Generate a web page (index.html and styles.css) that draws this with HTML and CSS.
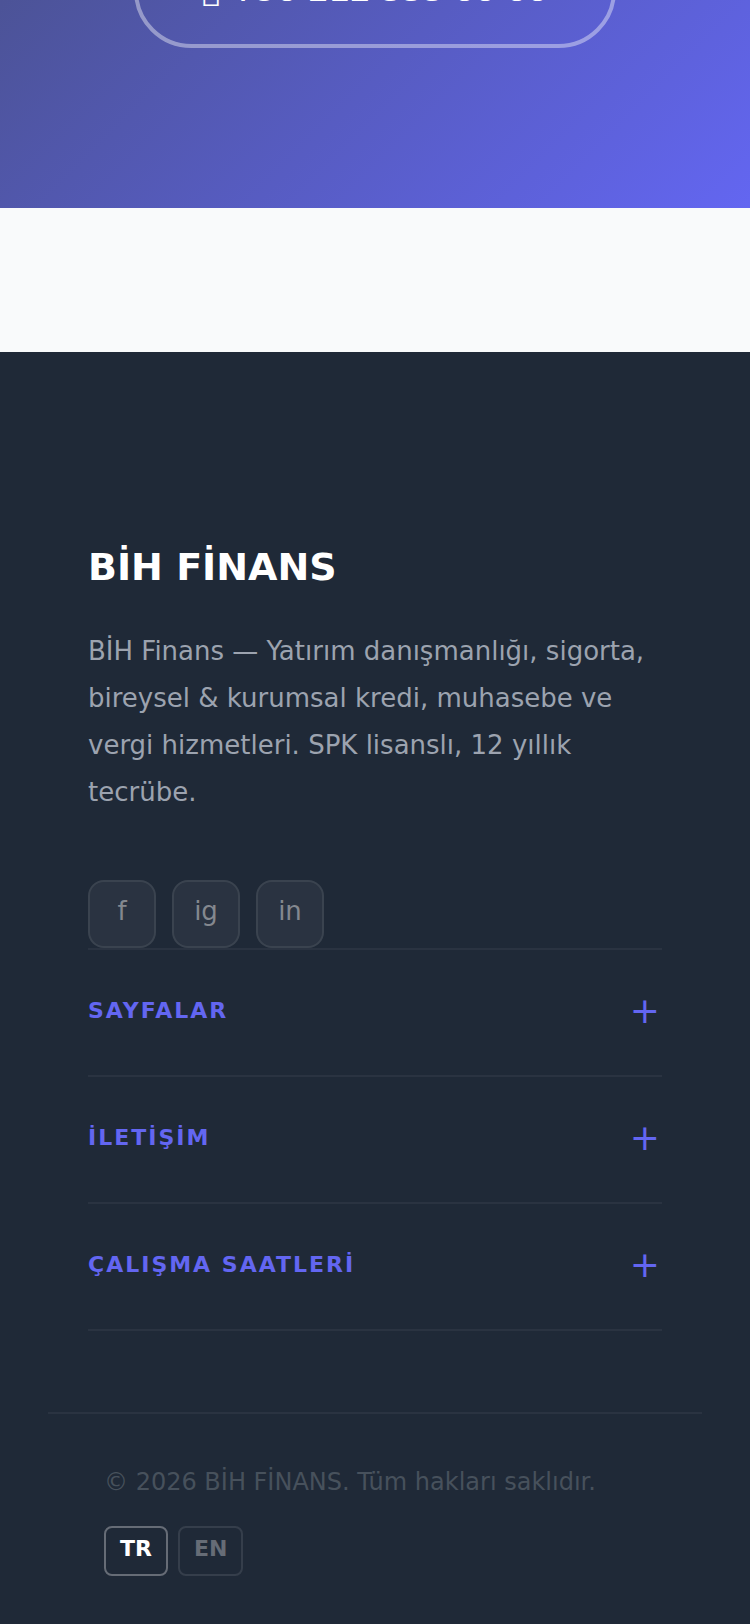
FILE: index.html
```html
<!DOCTYPE html>
<html lang="tr">
<head>
<meta charset="UTF-8">
<meta name="viewport" content="width=device-width, initial-scale=1">
<title>BİH FİNANS</title>
<link rel="stylesheet" href="styles.css">
</head>
<body>
<section class="cta">
  <a class="cta-phone" href="tel:+902125550000">&#xf095; +90 212 555 00 00</a>
</section>
<footer class="footer">
  <div class="footer-grid">
    <div class="footer-brand">
      <h2>BİH FİNANS</h2>
      <p>BİH Finans — Yatırım danışmanlığı, sigorta, bireysel &amp; kurumsal kredi, muhasebe ve vergi hizmetleri. SPK lisanslı, 12 yıllık tecrübe.</p>
      <div class="socials">
        <a href="#">f</a>
        <a href="#">ig</a>
        <a href="#">in</a>
      </div>
    </div>
    <div class="accordion">
      <button class="accordion-btn" type="button"><span>SAYFALAR</span><span class="plus">+</span></button>
      <button class="accordion-btn" type="button"><span>İLETİŞİM</span><span class="plus">+</span></button>
      <button class="accordion-btn" type="button"><span>ÇALIŞMA SAATLERİ</span><span class="plus">+</span></button>
    </div>
  </div>
  <div class="footer-bottom">
    <p>© 2026 BİH FİNANS. Tüm hakları saklıdır.</p>
    <div class="langs">
      <button class="lang active" type="button">TR</button>
      <button class="lang" type="button">EN</button>
    </div>
  </div>
</footer>
</body>
</html>
```
FILE: styles.css
```css
* { box-sizing: border-box; margin: 0; padding: 0; }
body { font-family: "DejaVu Sans", sans-serif; background: #f9fafb; overflow-x: hidden; }
a { text-decoration: none; }
button { font-family: inherit; background: none; border: none; cursor: pointer; }

/* call to action, scrolled so that only its lower end shows */
.cta { display: flex; justify-content: center; align-items: flex-end; height: 208px; padding-bottom: 160px; margin-bottom: 144px; background: linear-gradient(135deg, #4c5397, #6366f1); }
.cta-phone { flex-shrink: 0; padding: 36px 64px 35px; border: 4px solid rgba(255,255,255,0.4); border-radius: 60px; color: #fff; font-size: 30px; line-height: 36px; font-weight: 700; white-space: nowrap; }

.footer { background: #1f2937; padding: 192px 48px 48px; }
.footer-grid { padding: 0 40px 81px; }
.footer-brand h2 { color: #fff; font-size: 38px; line-height: 46px; margin-bottom: 38px; }
.footer-brand p { color: #9ca3af; font-size: 26px; line-height: 47px; margin-bottom: 64px; }
.socials { display: flex; gap: 16px; }
.socials a { display: flex; justify-content: center; width: 68px; height: 68px; border: 2px solid rgba(255,255,255,0.08); border-radius: 16px; background: rgba(255,255,255,0.05); color: #84888f; font-size: 26px; line-height: 58px; }

.accordion { border-top: 2px solid #2a3341; }
.accordion-btn { display: flex; justify-content: space-between; align-items: center; width: 100%; height: 127px; padding-bottom: 4px; border-bottom: 2px solid #2a3341; color: #6366f1; font-size: 22px; font-weight: 700; letter-spacing: 2px; }
.plus { font-size: 36px; font-weight: 400; }

.footer-bottom { border-top: 2px solid #2a3341; padding: 48px 56px 0; }
.footer-bottom p { color: #47515c; font-size: 24px; line-height: 40px; margin-bottom: 24px; }
.langs { display: flex; gap: 10px; }
.lang { height: 50px; padding: 0 14px 6px; border: 2px solid rgba(255,255,255,0.1); border-radius: 8px; color: #666c76; font-size: 22px; font-weight: 700; }
.lang.active { border-color: #666c76; color: #fff; }
```
